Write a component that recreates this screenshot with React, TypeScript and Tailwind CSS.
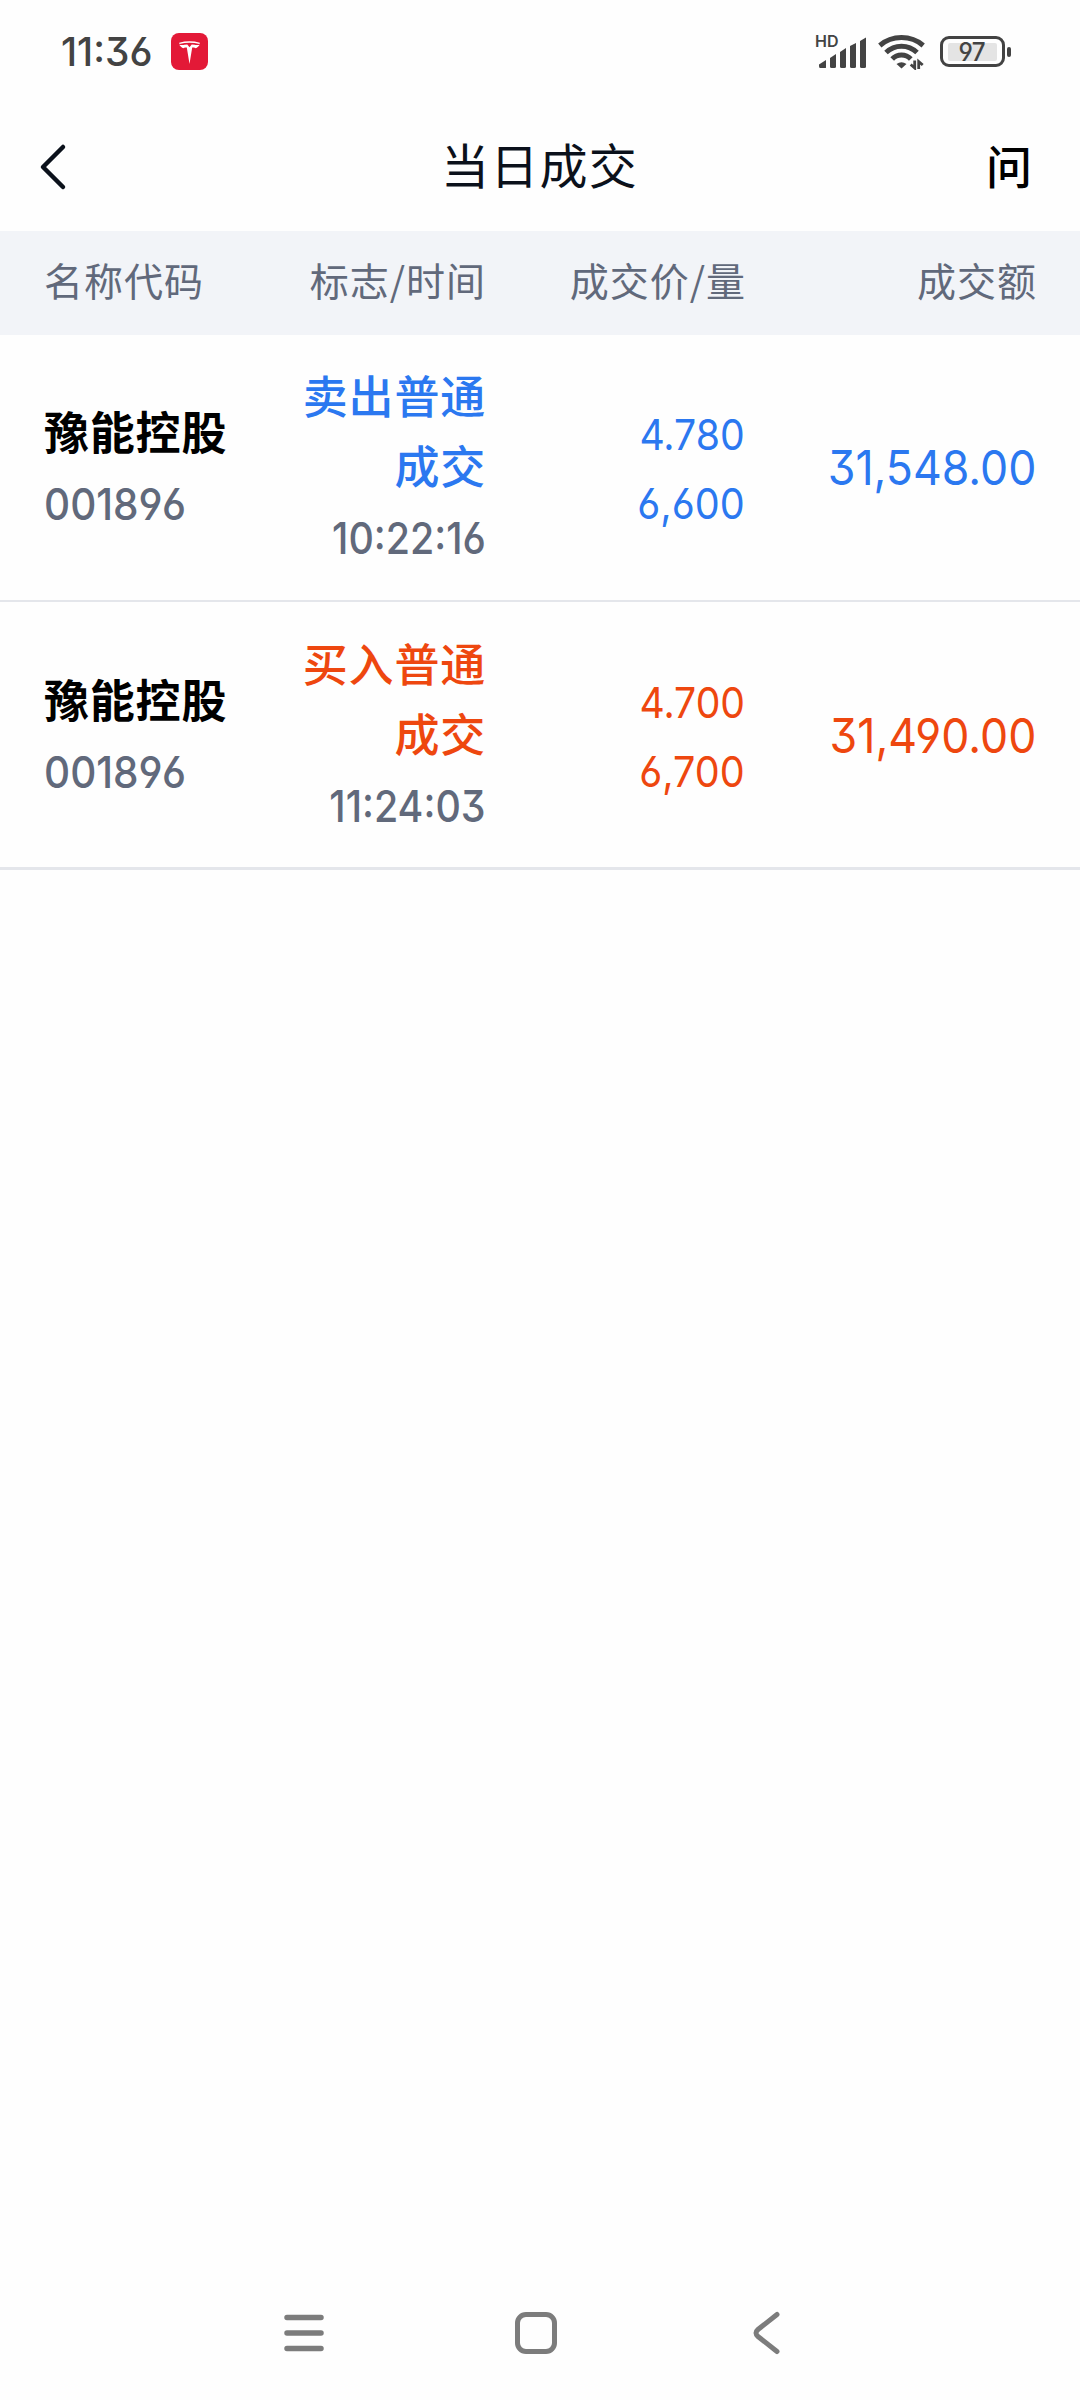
import { FC, ReactNode } from 'react';

interface Deal {
  name: string;
  code: string;
  side: string;
  time: string;
  price: string;
  volume: string;
  amount: string;
  type: 'sell' | 'buy';
}

const deals: Deal[] = [
  {
    name: '豫能控股',
    code: '001896',
    side: '卖出普通成交',
    time: '10:22:16',
    price: '4.780',
    volume: '6,600',
    amount: '31,548.00',
    type: 'sell'
  },
  {
    name: '豫能控股',
    code: '001896',
    side: '买入普通成交',
    time: '11:24:03',
    price: '4.700',
    volume: '6,700',
    amount: '31,490.00',
    type: 'buy'
  }
];

// Digits with open 6/9 and a flat-top 3
const Num: FC<{ className?: string; children: ReactNode }> = ({ className = '', children }) => (
  <span
    className={`inline-block whitespace-nowrap font-['Inter',sans-serif] [font-feature-settings:'cv03','cv04','cv09'] ${className}`}
  >
    {children}
  </span>
);

const StatusBar: FC = () => (
  <div className="flex h-[103px] items-center pl-[61px] pr-[69px] text-[#434343]">
    <Num className="w-[100px] origin-left scale-x-[0.995] pt-[2px] text-[39px] font-medium">11:36</Num>
    <svg className="ml-[10px]" width="37" height="37" viewBox="0 0 37 37">
      <rect width="37" height="37" rx="8" fill="#e31937" />
      <path
        d="M18.500 31 15.800 14.600C14 14.200 13 14.600 12.400 15.200 10.800 14.600 9 13.200 8.300 11.700 10.300 12 12 12.200 13.500 11.700L16.300 11.500 18.500 14.300 20.700 11.500 23.500 11.700C25 12.200 26.700 12 28.700 11.700 28 13.200 26.200 14.600 24.600 15.200 24 14.600 23 14.200 21.200 14.600Z"
        fill="#fff"
      />
      <path d="M8.300 10.400Q18.500 7.600 28.700 10.400" stroke="#fff" strokeWidth="1.300" fill="none" />
    </svg>

    <div className="ml-auto flex items-center">
      <div className="relative h-[34px] w-[50px]">
        <span className="absolute -left-[3px] -top-px font-['Inter',sans-serif] text-[16px] font-semibold leading-[14px]">
          HD
        </span>
        <svg width="50" height="34" viewBox="1 0 50 34" fill="currentColor">
          <path d="M2 29.500 9 25V32.500Q9 33 8 33H3Q2 33 2 31Z" />
          <path d="M13 23 19 19V31.500Q19 33 17.500 33H14.500Q13 33 13 31.500Z" />
          <path d="M23 17 29 13V31.500Q29 33 27.500 33H24.500Q23 33 23 31.500Z" />
          <path d="M33 11 39 8V31.500Q39 33 37.500 33H34.500Q33 33 33 31.500Z" />
          <path d="M43 6 49 2.500V31.500Q49 33 47.500 33H44.500Q43 33 43 31.500Z" />
        </svg>
      </div>
      <svg className="ml-[10px] mr-[2px]" width="48" height="36" viewBox="0 0 48 36" fill="none" stroke="currentColor" strokeWidth="5">
        <path d="M1.800 11.500Q11 3.600 23.500 3.600T45.200 11.500" />
        <path d="M8 18.500Q14.500 12.200 23.500 12.200T39 18.500" />
        <path d="M14.200 25Q18 20.900 23.500 20.900T32.800 25" />
        <path d="M18.500 30Q23.500 26.500 28.500 30L23.500 34.500Z" fill="currentColor" stroke="none" />
        <path d="M32.700 30.500 36.700 34V26.500M40.700 35V27.500L44.700 31" strokeWidth="2.800" />
      </svg>
      <div className="ml-[12px] flex h-[31px] w-[65px] items-center justify-center rounded-[9px] border-[3.500px] border-[#434343]">
        <div className="flex h-[18px] w-[49px] items-center justify-center rounded-[2px] bg-[#e4e4e4]">
          <Num className="scale-x-[0.97] pt-px text-[25px] font-medium leading-none">97</Num>
        </div>
      </div>
      <div className="ml-[2px] h-[10px] w-[4px] rounded-[2px] bg-[#434343]" />
    </div>
  </div>
);

const Header: FC = () => (
  <header className="flex h-[128px] items-center justify-between pl-[38px] pr-[48px] text-[#0b111b]">
    <svg width="48" height="50" viewBox="0 0 48 50" fill="none" stroke="currentColor" strokeWidth="4.500" strokeLinecap="round" strokeLinejoin="round">
      <path d="M25 5 5 25 25 45" />
    </svg>
    <h1 className="pb-[8px] pl-[7px] text-[48px] leading-none tracking-[1.300px]">当日成交</h1>
    <span className="pb-[7px] text-[46px] font-medium leading-none text-black">问</span>
  </header>
);

const DealRow: FC<{ deal: Deal; last: boolean }> = ({ deal, last }) => {
  const color = deal.type === 'sell' ? 'text-[#2b78f0]' : 'text-[#ee470f]';
  return (
    <div
      className={`grid grid-cols-[201px_240px_260px_291px] items-center border-[#e4e6eb] px-[44px] ${
        last ? 'h-[268px] border-b-[3px] pt-[2px]' : 'h-[267px] border-b-2'
      }`}
    >
      <div className="flex flex-col gap-[3px] whitespace-nowrap">
        <span className="text-[45px] font-bold leading-[70px] tracking-[0.800px] text-black">{deal.name}</span>
        <Num className="origin-left scale-x-[0.92] text-[44px] font-[450] leading-[70px] text-[#61697b]">{deal.code}</Num>
      </div>
      <div className="flex flex-col items-end">
        <p className={`-mr-px w-[190px] text-right text-[45px] font-medium leading-[70px] tracking-[0.800px] ${color}`}>
          {deal.side}
        </p>
        <Num className="-mr-px origin-right scale-x-[0.895] text-[44px] font-[450] leading-[76px] text-[#61697b]">{deal.time}</Num>
      </div>
      <div className={`flex flex-col items-end pt-[3px] ${color}`}>
        <Num className="origin-right scale-x-[0.91] text-[43px] leading-[69px]">{deal.price}</Num>
        <Num className="origin-right scale-x-[0.92] text-[43px] leading-[69px]">{deal.volume}</Num>
      </div>
      <div className={`flex justify-end ${color}`}>
        <Num className="origin-right scale-x-[0.93] text-[48px] leading-[70px]">{deal.amount}</Num>
      </div>
    </div>
  );
};

const NavBar: FC = () => (
  <nav className="flex h-[134px] items-center justify-between pl-[283px] pr-[298px] text-[#7c7c7c]">
    <svg width="42" height="44" viewBox="0 0 42 44" stroke="currentColor" strokeWidth="5.500" strokeLinecap="round">
      <path d="M4 6.500H38M4 22H38M4 37.500H38" />
    </svg>
    <svg className="mr-[6px]" width="44" height="44" viewBox="0 0 44 44" fill="none" stroke="currentColor" strokeWidth="5">
      <rect x="3.500" y="3.500" width="37" height="37" rx="8.500" />
    </svg>
    <svg width="30" height="44" viewBox="0 0 30 44" fill="none" stroke="currentColor" strokeWidth="5" strokeLinecap="round">
      <path d="M25 3.500 6 18.500Q2 22 6 25.500L25 40.500" />
    </svg>
  </nav>
);

const App: FC = () => {
  return (
    <div className="flex h-[2400px] w-[1080px] flex-col bg-[#fefefe] font-['Noto_Sans_CJK_SC',sans-serif]">
      <StatusBar />
      <Header />
      <div className="grid h-[104px] grid-cols-[201px_240px_260px_291px] items-center bg-[#f2f4f8] px-[44px] pb-[7px] text-[39px] leading-none tracking-[1px] text-[#61697b]">
        <span>名称代码</span>
        <span className="-mr-px text-right">标志/时间</span>
        <span className="-mr-px text-right">成交价/量</span>
        <span className="-mr-px text-right">成交额</span>
      </div>
      <main className="flex-1">
        {deals.map((deal, index) => (
          <DealRow key={index} deal={deal} last={index === deals.length - 1} />
        ))}
      </main>
      <NavBar />
    </div>
  );
};

export default App;
